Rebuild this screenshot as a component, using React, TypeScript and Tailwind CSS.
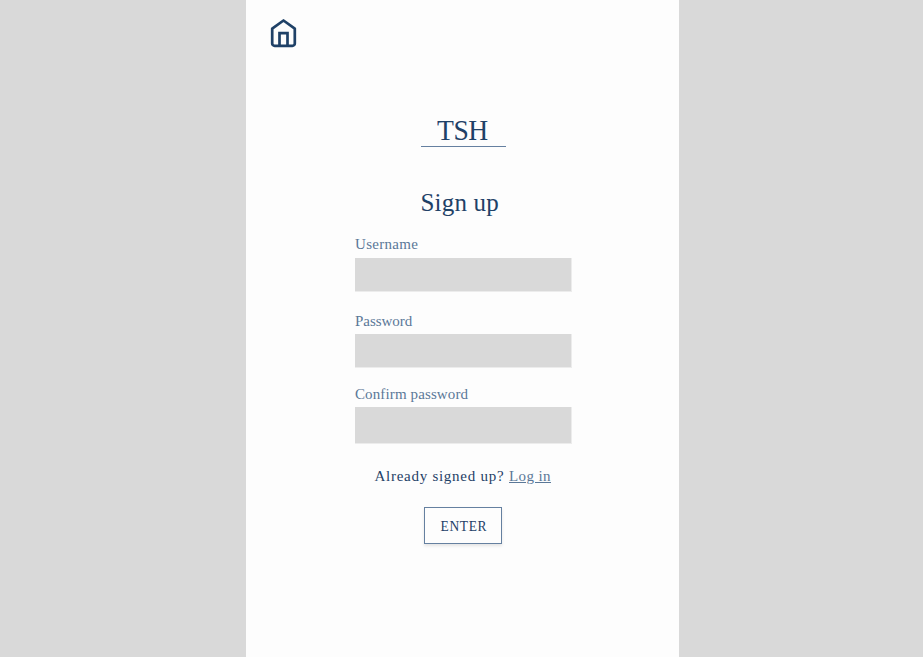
const fields = [
  { label: 'Username', type: 'text', gap: 'mt-4', box: 'mt-1 h-[33px]', tracking: 'tracking-[0.3px]' },
  { label: 'Password', type: 'password', gap: 'mt-[19px]', box: 'mt-[3px] h-[33px]', tracking: 'tracking-[-0.05px]' },
  { label: 'Confirm password', type: 'password', gap: 'mt-4', box: 'mt-[3px] h-9', tracking: 'tracking-[0.12px]' },
];

function HomeIcon() {
  return (
    <svg width="28" height="30" viewBox="0 0 28 30" fill="none" stroke="#1f4167" strokeWidth="2.7" strokeLinejoin="round">
      <path d="M2.2 10.6 13.5 2.5l11.3 8.1v14.8a2.4 2.4 0 0 1-2.4 2.4H4.6a2.4 2.4 0 0 1-2.4-2.4Z" />
      <path d="M9.5 27.2V15.2h8v12" strokeLinejoin="miter" />
    </svg>
  );
}

export default function App() {
  return (
    <div className="flex h-[657px] w-[923px] bg-[#d9d9d9] font-['Liberation_Serif',serif]">
      <main className="ml-[246px] h-full w-[433px] bg-[#fdfdfd] text-[#1f4167]">
        <header className="h-[115px] pt-[18px] pl-6">
          <a href="#" aria-label="Home" className="block w-7">
            <HomeIcon />
          </a>
        </header>
        <h1 className="ml-[175px] h-8 w-[85px] border-b border-[#6580a0] pl-4 text-[30px] leading-[30px]">
          <span className="inline-block origin-left scale-x-[0.92] tracking-[-0.5px]">TSH</span>
        </h1>
        <h2 className="mt-[41px] ml-[174.5px] text-[25px] leading-[30px] tracking-[0.2px]">Sign up</h2>
        <form className="ml-[109px] w-[217px]">
          {fields.map((f) => (
            <label key={f.label} className={`block text-[#5b7898] ${f.gap}`}>
              <span className={`block text-[15px] leading-5 ${f.tracking}`}>{f.label}</span>
              <input
                type={f.type}
                className={`box-content block w-[216px] border-r border-b border-[#ececec] bg-[#d9d9d9] bg-clip-padding ${f.box}`}
              />
            </label>
          ))}
          <p className="mt-[22px] ml-[19.5px] flex text-[15px] leading-5 whitespace-nowrap">
            <span className="w-[134.5px] tracking-[0.73px]">Already signed up?</span>
            <a href="#" className="tracking-[0.4px] text-[#5b7898] underline underline-offset-1">
              Log in
            </a>
          </p>
          <button
            type="button"
            className="mt-[21px] ml-[69px] flex h-[37px] w-[78px] items-center justify-center border border-[#6580a0] pt-0.5 pl-0.5 text-[15px] shadow-[0_2px_3px_rgba(0,0,0,0.1)]"
          >
            <span className="inline-block scale-x-[0.9] tracking-[0.7px]">ENTER</span>
          </button>
        </form>
      </main>
    </div>
  );
}
